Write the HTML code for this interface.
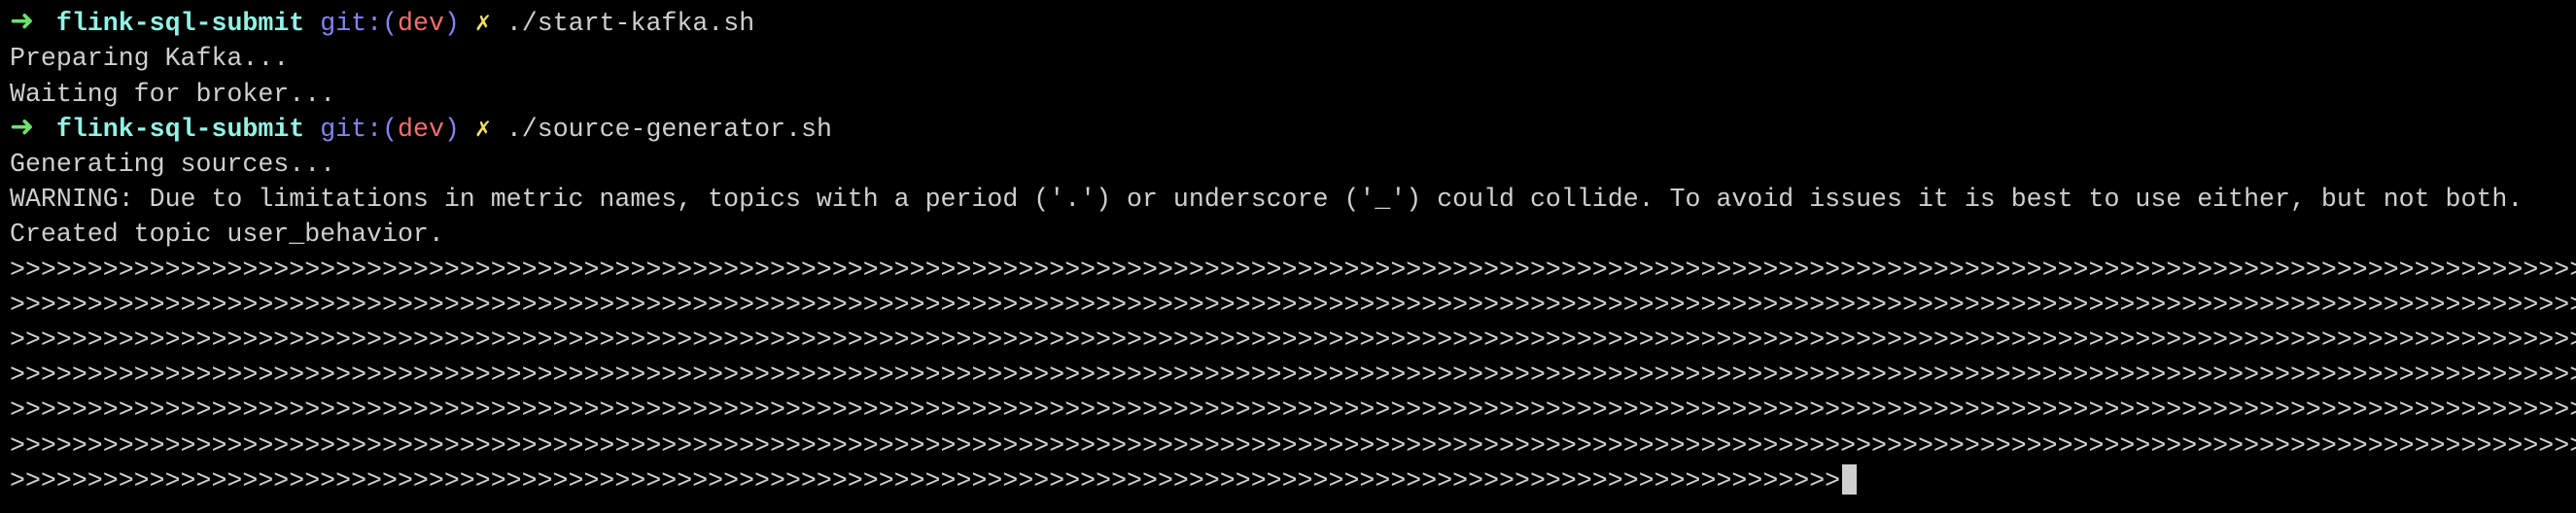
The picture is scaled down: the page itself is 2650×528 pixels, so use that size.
<!DOCTYPE html>
<html><head><meta charset="utf-8"><style>
html,body{margin:0;padding:0;background:#000;width:2650px;height:528px;overflow:hidden}
.t{position:absolute;left:10px;top:-30px;font-family:"Liberation Mono","DejaVu Sans Mono",monospace;font-size:26.6px;line-height:36.2px;color:#cfcfcf;white-space:pre}
.a{color:#6ee06e;font-weight:bold;font-family:"DejaVu Sans",sans-serif;font-size:30px;display:inline-block;width:16px;line-height:20px}
.d{color:#92f2e4;font-weight:bold}
.g{color:#8484f0}
.r{color:#f07070}
.y{color:#f0e060}
.cur{display:inline-block;width:15px;height:31px;background:#cfcfcf;vertical-align:-7px;margin-left:2px}
</style></head><body>
<div class="t"> 
<span class="a">➜</span>  <span class="d">flink-sql-submit</span> <span class="g">git:(</span><span class="r">dev</span><span class="g">)</span> <span class="y">✗</span> ./start-kafka.sh
Preparing Kafka...
Waiting for broker...
<span class="a">➜</span>  <span class="d">flink-sql-submit</span> <span class="g">git:(</span><span class="r">dev</span><span class="g">)</span> <span class="y">✗</span> ./source-generator.sh
Generating sources...
WARNING: Due to limitations in metric names, topics with a period ('.') or underscore ('_') could collide. To avoid issues it is best to use either, but not both.
Created topic user_behavior.
>>>>>>>>>>>>>>>>>>>>>>>>>>>>>>>>>>>>>>>>>>>>>>>>>>>>>>>>>>>>>>>>>>>>>>>>>>>>>>>>>>>>>>>>>>>>>>>>>>>>>>>>>>>>>>>>>>>>>>>>>>>>>>>>>>>>>>>>>>>>>>>>>>>>>>>>>>>>>>>>>>>>>>>>>>
>>>>>>>>>>>>>>>>>>>>>>>>>>>>>>>>>>>>>>>>>>>>>>>>>>>>>>>>>>>>>>>>>>>>>>>>>>>>>>>>>>>>>>>>>>>>>>>>>>>>>>>>>>>>>>>>>>>>>>>>>>>>>>>>>>>>>>>>>>>>>>>>>>>>>>>>>>>>>>>>>>>>>>>>>>
>>>>>>>>>>>>>>>>>>>>>>>>>>>>>>>>>>>>>>>>>>>>>>>>>>>>>>>>>>>>>>>>>>>>>>>>>>>>>>>>>>>>>>>>>>>>>>>>>>>>>>>>>>>>>>>>>>>>>>>>>>>>>>>>>>>>>>>>>>>>>>>>>>>>>>>>>>>>>>>>>>>>>>>>>>
>>>>>>>>>>>>>>>>>>>>>>>>>>>>>>>>>>>>>>>>>>>>>>>>>>>>>>>>>>>>>>>>>>>>>>>>>>>>>>>>>>>>>>>>>>>>>>>>>>>>>>>>>>>>>>>>>>>>>>>>>>>>>>>>>>>>>>>>>>>>>>>>>>>>>>>>>>>>>>>>>>>>>>>>>>
>>>>>>>>>>>>>>>>>>>>>>>>>>>>>>>>>>>>>>>>>>>>>>>>>>>>>>>>>>>>>>>>>>>>>>>>>>>>>>>>>>>>>>>>>>>>>>>>>>>>>>>>>>>>>>>>>>>>>>>>>>>>>>>>>>>>>>>>>>>>>>>>>>>>>>>>>>>>>>>>>>>>>>>>>>
>>>>>>>>>>>>>>>>>>>>>>>>>>>>>>>>>>>>>>>>>>>>>>>>>>>>>>>>>>>>>>>>>>>>>>>>>>>>>>>>>>>>>>>>>>>>>>>>>>>>>>>>>>>>>>>>>>>>>>>>>>>>>>>>>>>>>>>>>>>>>>>>>>>>>>>>>>>>>>>>>>>>>>>>>>
>>>>>>>>>>>>>>>>>>>>>>>>>>>>>>>>>>>>>>>>>>>>>>>>>>>>>>>>>>>>>>>>>>>>>>>>>>>>>>>>>>>>>>>>>>>>>>>>>>>>>>>>>>>>>>>>>>>>>><span class="cur"></span></div>
</body></html>
